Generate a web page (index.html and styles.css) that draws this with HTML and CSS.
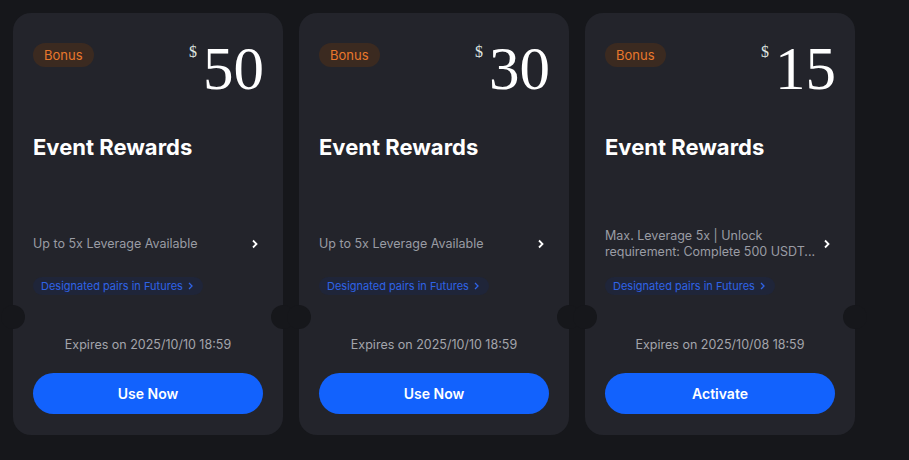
FILE: index.html
```html
<!DOCTYPE html>
<html lang="en">
<head>
    <meta charset="UTF-8">
    <meta name="viewport" content="width=device-width, initial-scale=1.0">
    <title>Coupons</title>
    <link rel="stylesheet" href="styles.css">
</head>
<body>
    <div class="cards">
        <div class="card">
            <div class="card-top">
                <span class="tag">Bonus</span>
                <div class="amount"><span class="cur">$</span>50</div>
            </div>
            <h2 class="title">Event Rewards</h2>
            <div class="desc">
                <span class="desc-text">Up to 5x Leverage Available</span>
                <svg class="chev" width="10" height="10" viewBox="0 0 10 10"><path d="M3 1.5 L6.5 5 L3 8.5" fill="none" stroke="#fff" stroke-width="1.8"/></svg>
            </div>
            <span class="pairs">Designated pairs in Futures <svg width="7" height="8" viewBox="0 0 7 8"><path d="M2 1 L5 4 L2 7" fill="none" stroke="#2f63e6" stroke-width="1.3"/></svg></span>
            <div class="divider"></div>
            <div class="expires">Expires on 2025/10/10 18:59</div>
            <button class="btn">Use Now</button>
        </div>
        <div class="card">
            <div class="card-top">
                <span class="tag">Bonus</span>
                <div class="amount"><span class="cur">$</span>30</div>
            </div>
            <h2 class="title">Event Rewards</h2>
            <div class="desc">
                <span class="desc-text">Up to 5x Leverage Available</span>
                <svg class="chev" width="10" height="10" viewBox="0 0 10 10"><path d="M3 1.5 L6.5 5 L3 8.5" fill="none" stroke="#fff" stroke-width="1.8"/></svg>
            </div>
            <span class="pairs">Designated pairs in Futures <svg width="7" height="8" viewBox="0 0 7 8"><path d="M2 1 L5 4 L2 7" fill="none" stroke="#2f63e6" stroke-width="1.3"/></svg></span>
            <div class="divider"></div>
            <div class="expires">Expires on 2025/10/10 18:59</div>
            <button class="btn">Use Now</button>
        </div>
        <div class="card">
            <div class="card-top">
                <span class="tag">Bonus</span>
                <div class="amount"><span class="cur">$</span>15</div>
            </div>
            <h2 class="title">Event Rewards</h2>
            <div class="desc">
                <span class="desc-text">Max. Leverage 5x | Unlock requirement: Complete 500 USDT...</span>
                <svg class="chev" width="10" height="10" viewBox="0 0 10 10"><path d="M3 1.5 L6.5 5 L3 8.5" fill="none" stroke="#fff" stroke-width="1.8"/></svg>
            </div>
            <span class="pairs">Designated pairs in Futures <svg width="7" height="8" viewBox="0 0 7 8"><path d="M2 1 L5 4 L2 7" fill="none" stroke="#2f63e6" stroke-width="1.3"/></svg></span>
            <div class="divider"></div>
            <div class="expires">Expires on 2025/10/08 18:59</div>
            <button class="btn">Activate</button>
        </div>
    </div>
</body>
</html>
```

FILE: styles.css
```css
body {
    margin: 0;
    background: #16171b;
    font-family: Inter, "Noto Sans", sans-serif;
    height: 460px;
    overflow: hidden;
}
.cards {
    display: flex;
    gap: 16px;
    padding: 13px;
}
.card {
    width: 270px;
    height: 422px;
    box-sizing: border-box;
    background: #23242b;
    border-radius: 18px;
    padding: 0 20px;
    display: flex;
    flex-direction: column;
}
.card-top {
    display: flex;
    justify-content: space-between;
    align-items: flex-start;
    height: 100px;
}
.tag {
    margin-top: 30px;
    background: #3b2a20;
    color: #e9782c;
    font-size: 13px;
    height: 24px;
    line-height: 24px;
    padding: 0 11px;
    border-radius: 12px;
}
.amount {
    margin-top: 25px;
    font-family: "Liberation Serif", serif;
    font-size: 61px;
    line-height: 61px;
    color: #fff;
    display: flex;
    align-items: flex-start;
    margin-right: -1px;
}
.cur {
    font-size: 16px;
    line-height: 16px;
    margin-top: 6px;
    margin-right: 6px;
    color: #dfe8e2;
}
.title {
    margin: 20px 0 0;
    font-size: 22px;
    font-weight: 700;
    color: #fff;
    line-height: 28px;
}
.desc {
    margin-top: 66px;
    height: 34px;
    display: flex;
    align-items: center;
    justify-content: space-between;
}
.desc-text {
    font-size: 12.5px;
    line-height: 16px;
    color: #9a9ca4;
    width: 215px;
}
.chev {
    margin-right: 3px;
}
.pairs {
    margin-top: 16px;
    align-self: flex-start;
    background: #1f2539;
    color: #2f63e6;
    font-size: 11px;
    height: 18px;
    line-height: 18px;
    padding: 0 9px 0 8px;
    border-radius: 9px;
    display: flex;
    align-items: center;
    gap: 4px;
}
.divider {
    height: 24px;
    margin-top: 10px;
    position: relative;
}
.divider::before,
.divider::after {
    content: "";
    position: absolute;
    top: 0;
    width: 24px;
    height: 24px;
    border-radius: 50%;
    background: #16171b;
}
.divider::before {
    left: -32px;
}
.divider::after {
    right: -32px;
}
.expires {
    margin-top: 7px;
    text-align: center;
    font-size: 12.5px;
    color: #a3a5ab;
    line-height: 18px;
}
.btn {
    margin-top: 19px;
    height: 41px;
    border: none;
    border-radius: 21px;
    background: #1262fd;
    color: #fff;
    font-family: Inter, "Noto Sans", sans-serif;
    font-size: 14px;
    font-weight: 600;
}
```
